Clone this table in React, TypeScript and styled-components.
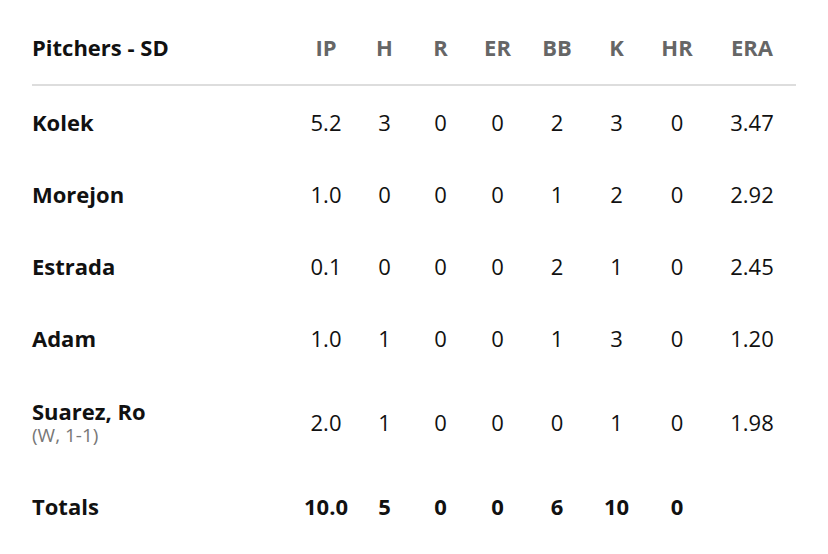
import React from "react";
import styled, { createGlobalStyle } from "styled-components";

const Global = createGlobalStyle`
  html, body { margin: 0; padding: 0; background: #fff; }
  body { font-family: "Open Sans", "Liberation Sans", sans-serif; color: #111; }
`;

const COLS = "264px 60px 57px 55px 59px 60px 59px 62px 88px";

const Table = styled.div`
  width: 764px;
  margin: 10px 0 0 32px;
  display: flex;
  flex-direction: column;
`;

const Row = styled.div<{ $h: number; $header?: boolean }>`
  display: grid;
  grid-template-columns: ${COLS};
  align-items: center;
  height: ${(p) => p.$h}px;
  border-bottom: ${(p) => (p.$header ? "2px solid #dddddd" : "none")};
  box-sizing: border-box;
`;

const Name = styled.div`
  display: flex;
  flex-direction: column;
`;

const NameText = styled.span`
  font-size: 22px;
  font-weight: 700;
  color: #111;
  line-height: 26px;
`;

const Note = styled.span`
  font-size: 19px;
  color: #777;
  line-height: 22px;
`;

const Cell = styled.div<{ $kind: "head" | "data" | "total" }>`
  text-align: center;
  font-size: 22px;
  font-weight: ${(p) => (p.$kind === "data" ? 400 : 700)};
  color: ${(p) => (p.$kind === "head" ? "#666666" : "#111")};
`;

const heads = ["IP", "H", "R", "ER", "BB", "K", "HR", "ERA"];

type P = { name: string; note?: string; stats: string[] };

const pitchers: P[] = [
  { name: "Kolek", stats: ["5.2", "3", "0", "0", "2", "3", "0", "3.47"] },
  { name: "Morejon", stats: ["1.0", "0", "0", "0", "1", "2", "0", "2.92"] },
  { name: "Estrada", stats: ["0.1", "0", "0", "0", "2", "1", "0", "2.45"] },
  { name: "Adam", stats: ["1.0", "1", "0", "0", "1", "3", "0", "1.20"] },
  { name: "Suarez, Ro", note: "(W, 1-1)", stats: ["2.0", "1", "0", "0", "0", "1", "0", "1.98"] },
];

const totals = ["10.0", "5", "0", "0", "6", "10", "0", ""];

export default function App() {
  return (
    <>
      <Global />
      <Table>
        <Row $h={76} $header>
          <Name>
            <NameText>Pitchers - SD</NameText>
          </Name>
          {heads.map((h) => (
            <Cell key={h} $kind="head">{h}</Cell>
          ))}
        </Row>
        {pitchers.map((p) => (
          <Row key={p.name} $h={p.note ? 96 : 72}>
            <Name>
              <NameText>{p.name}</NameText>
              {p.note && <Note>{p.note}</Note>}
            </Name>
            {p.stats.map((s, i) => (
              <Cell key={i} $kind="data">{s}</Cell>
            ))}
          </Row>
        ))}
        <Row $h={72}>
          <Name>
            <NameText>Totals</NameText>
          </Name>
          {totals.map((s, i) => (
            <Cell key={i} $kind="total">{s}</Cell>
          ))}
        </Row>
      </Table>
    </>
  );
}
